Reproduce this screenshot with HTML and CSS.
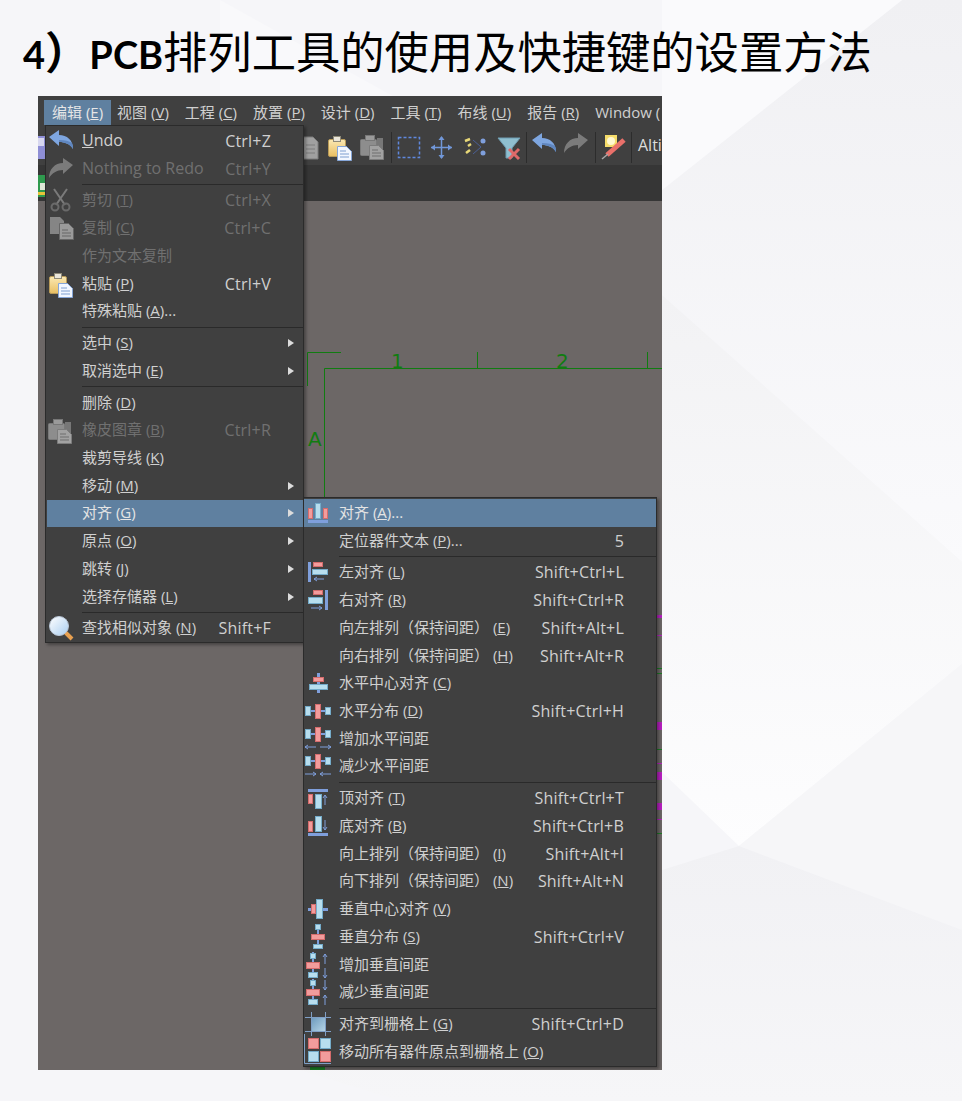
FILE: index.html
```html
<!DOCTYPE html>
<html lang="zh-CN">
<head>
  <meta charset="UTF-8" />
  <title>PCB排列工具</title>
  <link rel="stylesheet" href="styles.css">
</head>
<body>

  <!-- shared icon parts -->
  <svg class="defs" aria-hidden="true">
    <defs>
      <linearGradient id="gold" x1="0" y1="0" x2="0" y2="1">
        <stop offset="0" stop-color="#fbe9b4"/><stop offset="1" stop-color="#e9bf62"/>
      </linearGradient>
      <linearGradient id="glass" x1="0" y1="0" x2="1" y2="1">
        <stop offset="0" stop-color="#ffffff"/><stop offset="1" stop-color="#a9cdf0"/>
      </linearGradient>
      <linearGradient id="cell" x1="0" y1="0" x2="1" y2="1">
        <stop offset="0" stop-color="#6f9cbf"/><stop offset="1" stop-color="#b5d4e6"/>
      </linearGradient>
      <linearGradient id="bgfade" x1="0" y1="0" x2="0" y2="1">
        <stop offset="0" stop-color="#f0f0f3"/><stop offset="1" stop-color="#fafafc"/>
      </linearGradient>
      <linearGradient id="bgfade2" x1="0" y1="0" x2="0" y2="1">
        <stop offset="0" stop-color="#f1f1f4"/><stop offset="1" stop-color="#f6f6f8"/>
      </linearGradient>
      <linearGradient id="bgfade3" x1="0" y1="0" x2="0" y2="1">
        <stop offset="0" stop-color="#f2f2f4"/><stop offset="1" stop-color="#fdfdfe"/>
      </linearGradient>
    </defs>
    <symbol id="s-paste" viewBox="0 0 28 28">
      <rect x="2.5" y="6.5" width="17" height="17" rx="1.5" fill="url(#gold)" stroke="#b89a58"/>
      <rect x="7.5" y="3.5" width="7" height="5" fill="#eae6da" stroke="#8f8a78"/>
      <path d="M11.5 13.5h9l5 5v9h-14z" fill="#f2f7ff" stroke="#86a6d8"/>
      <path d="M14 18h6M14 21h9M14 24h9" stroke="#7f9fd0" fill="none"/>
    </symbol>
    <symbol id="s-stamp" viewBox="0 0 28 28">
      <rect x="1.5" y="7.5" width="16" height="16" rx="1" fill="#8d8d8d" stroke="#7a7a7a"/>
      <rect x="6.5" y="3.5" width="9" height="5" fill="#9a9a9a" stroke="#777"/>
      <rect x="18" y="6" width="6" height="14" fill="#777"/>
      <path d="M10.5 13.5h9l5 5v9h-14z" fill="#a2a2a2" stroke="#7c7c7c"/>
      <path d="M13 18h6M13 21h9M13 24h9" stroke="#6f6f6f" fill="none"/>
    </symbol>
    <symbol id="s-undo" viewBox="0 0 28 28">
      <path d="M2 10 12 3v5c8 0 14 5 14 14-3-5-8-7-14-7v4z" fill="#7ea6e0"/>
      <path d="M12 15c6 0 11 2 14 7 0-2 0-4-1-6-3-2-7-3-13-3z" fill="#5f86bf"/>
    </symbol>
    <symbol id="s-redo" viewBox="0 0 28 28">
      <path d="M26 10 16 3v5C8 8 2 14 2 23c3-5 8-8 14-8v4z" fill="#7b7b7b"/>
    </symbol>
    <symbol id="s-hdist" viewBox="0 0 28 28">
      <rect class="stem" x="1" y="13" width="25" height="2"/>
      <rect class="bl" x="1.5" y="9.5" width="5" height="9"/>
      <rect class="rd" x="11.5" y="7.5" width="5" height="14"/>
      <rect class="bl" x="21.5" y="10.5" width="5" height="7"/>
    </symbol>
    <symbol id="s-vdist" viewBox="0 0 28 28">
      <rect class="stem" x="8" y="1" width="2" height="25"/>
      <rect class="bl" x="6.5" y="2.5" width="5" height="5"/>
      <rect class="rd" x="2.5" y="11.5" width="13" height="6"/>
      <rect class="bl" x="4.5" y="21.5" width="9" height="5"/>
    </symbol>
  </svg>

  <!-- faint slide backdrop -->
  <svg class="backdrop" viewBox="0 0 962 1101" aria-hidden="true">
    <polygon points="902,0 962,0 962,562 662,295 662,190" fill="url(#bgfade)"/>
    <polygon points="662,295 962,562 962,664 739,846 662,772" fill="url(#bgfade3)"/>
    <polygon points="962,664 739,846 962,930" fill="#f6f6f8"/>
    <polygon points="739,846 962,930 962,1101 400,1101 300,1070 662,870" fill="url(#bgfade2)"/>
    <polygon points="220,0 400,100 220,100" fill="#f9f9fb"/>
    <polygon points="662,0 902,0 662,190" fill="#fafafc"/>
  </svg>

  <h1 class="title"><b>4<span class="paren">）</span>PCB</b>排列工具的使用及快捷键的设置方法</h1>

  <div class="shot">
    <nav class="menubar">
      <span class="top on">编辑 (<u>E</u>)</span>
      <span class="top">视图 (<u>V</u>)</span>
      <span class="top">工程 (<u>C</u>)</span>
      <span class="top">放置 (<u>P</u>)</span>
      <span class="top">设计 (<u>D</u>)</span>
      <span class="top">工具 (<u>T</u>)</span>
      <span class="top">布线 (<u>U</u>)</span>
      <span class="top">报告 (<u>R</u>)</span>
      <span class="top">Window (</span>
    </nav>

    <div class="toolbar">
      <svg class="strip" width="594" height="40" viewBox="0 0 594 40">
        <rect x="0" y="11" width="8" height="23" fill="#8f8fd6"/>
        <rect x="0" y="13" width="6" height="8" fill="#d8d8f0"/>
        <path d="M265 12h10l5 5v17h-15z" fill="#a0a0a0" stroke="#7d7d7d"/>
        <path d="M268 20h9M268 24h9M268 28h9" stroke="#7d7d7d"/>
        <use href="#s-paste" x="288" y="8" width="28" height="28"/>
        <use href="#s-stamp" x="321" y="7" width="28" height="28"/>
        <rect class="tb-sep" x="353" y="7" width="1" height="31"/>
        <rect x="360.5" y="12.5" width="21" height="20" fill="none" stroke="#5f88dd" stroke-width="1.5" stroke-dasharray="3 2"/>
        <path d="M393 22.5h21M403.500 12v21" stroke="#7197d8" stroke-width="1.5"/>
        <path d="M393 22.500l4-3v6zM414 22.500l-4-3v6zM403.500 11l-3 4h6zM403.500 34l-3-4h6z" fill="#7197d8"/>
        <path d="M435 15l8 7-8 7" fill="none" stroke="#4a5f95"/>
        <circle cx="445" cy="16" r="2.500" fill="#7f9fdc"/><circle cx="445" cy="28" r="2.500" fill="#7f9fdc"/>
        <path d="M427 16l5-2M433 19l-3 2M428 28l4-3" stroke="#e8d878" stroke-width="2.500"/>
        <path d="M460 13h22l-8 10v10h-6V23z" fill="#8fbfd0" stroke="#6f9db2"/>
        <path d="M471 24l10 10m0-10l-10 10" stroke="#e06a6a" stroke-width="3"/>
        <rect class="tb-sep" x="488" y="7" width="1" height="31"/>
        <use href="#s-undo" x="492" y="5" width="28" height="28"/>
        <use href="#s-redo" x="524" y="5" width="28" height="28"/>
        <rect class="tb-sep" x="557" y="7" width="1" height="31"/>
        <rect x="567" y="10" width="12" height="12" fill="#f5dc6a"/>
        <circle cx="573" cy="16" r="4" fill="#fff8d0"/>
        <path d="M586 15l-17 15" stroke="#e9706a" stroke-width="5"/>
        <path d="M570 29l-6 5" stroke="#a8a8a8" stroke-width="1.500"/>
        <rect class="tb-sep" x="593" y="7" width="1" height="31"/>
      </svg>
      <span class="tb-text">Alti</span>
    </div>

    <div class="tabstrip">
      <svg width="8" height="22" viewBox="0 0 8 22">
        <rect x="0" y="0" width="8" height="22" fill="#2f9a4e"/>
        <rect x="2" y="8" width="6" height="7" fill="#dfe8d8"/>
        <rect x="0" y="17" width="8" height="3" fill="#e8c43a"/>
      </svg>
    </div>

    <div class="canvas">
      <!-- the sheet border, as it lies on the drawing area -->
      <svg class="sheet" width="624" height="869" viewBox="0 0 624 869">
        <path class="wire" d="M303 151.500H269.500V185M624 167.500H286.500V300M439.500 151V167M609.500 151V167"/>
        <text class="sheet-label" x="353" y="167">1</text>
        <text class="sheet-label" x="518" y="167">2</text>
        <text class="sheet-label" x="270" y="245">A</text>
        <g fill="#b71fc0">
          <rect x="619" y="414" width="5" height="3"/>
          <rect x="619" y="434" width="5" height="1"/>
          <rect x="619" y="521" width="5" height="8"/>
          <rect x="619" y="562" width="5" height="1"/>
          <rect x="619" y="571" width="5" height="8"/>
          <rect x="619" y="602" width="5" height="7"/>
          <rect x="619" y="618" width="5" height="1"/>
        </g>
        <g fill="#1b7d24">
          <rect x="619" y="467" width="5" height="1"/>
          <rect x="619" y="472" width="5" height="1"/>
          <rect x="619" y="548" width="5" height="1"/>
          <rect x="619" y="632" width="5" height="1"/>
          <rect x="272" y="866" width="15" height="3"/>
        </g>
      </svg>
    </div>

    <div class="menu menu-edit">
      <div class="mi"><span class="cell"><svg class="ico"><use href="#s-undo"/></svg></span><span class="en"><u>U</u>ndo</span><span class="key">Ctrl+Z</span></div>
      <div class="mi off"><span class="cell"><svg class="ico"><use href="#s-redo"/></svg></span><span class="en">Nothing to Redo</span><span class="key">Ctrl+Y</span></div>
      <div class="sep"></div>
      <div class="mi off"><span class="cell"><svg class="ico" viewBox="0 0 28 28"><path d="M7 3l11 16M20 3L9 19" stroke="#7a7a7a" stroke-width="2" fill="none"/><circle cx="8" cy="21" r="3.500" fill="none" stroke="#6a6a6a" stroke-width="2"/><circle cx="19" cy="21" r="3.500" fill="none" stroke="#6a6a6a" stroke-width="2"/></svg></span><span>剪切 (<u>T</u>)</span><span class="key">Ctrl+X</span></div>
      <div class="mi off"><span class="cell"><svg class="ico" viewBox="0 0 28 28"><path d="M3 3h10l4 4v13H3z" fill="#858585"/><path d="M12.500 9.500h9l5 5v11h-14z" fill="#9a9a9a" stroke="#666"/><path d="M15 16h6M15 19h9M15 22h9" stroke="#666"/></svg></span><span>复制 (<u>C</u>)</span><span class="key">Ctrl+C</span></div>
      <div class="mi off"><span class="cell"></span><span>作为文本复制</span></div>
      <div class="mi"><span class="cell"><svg class="ico"><use href="#s-paste"/></svg></span><span>粘贴 (<u>P</u>)</span><span class="key">Ctrl+V</span></div>
      <div class="mi"><span class="cell"></span><span>特殊粘贴 (<u>A</u>)...</span></div>
      <div class="sep"></div>
      <div class="mi"><span class="cell"></span><span>选中 (<u>S</u>)</span><i class="more"></i></div>
      <div class="mi"><span class="cell"></span><span>取消选中 (<u>E</u>)</span><i class="more"></i></div>
      <div class="sep"></div>
      <div class="mi"><span class="cell"></span><span>删除 (<u>D</u>)</span></div>
      <div class="mi off"><span class="cell"><svg class="ico"><use href="#s-stamp"/></svg></span><span>橡皮图章 (<u>B</u>)</span><span class="key">Ctrl+R</span></div>
      <div class="mi"><span class="cell"></span><span>裁剪导线 (<u>K</u>)</span></div>
      <div class="mi"><span class="cell"></span><span>移动 (<u>M</u>)</span><i class="more"></i></div>
      <div class="mi on"><span class="cell"></span><span>对齐 (<u>G</u>)</span><i class="more"></i></div>
      <div class="mi"><span class="cell"></span><span>原点 (<u>O</u>)</span><i class="more"></i></div>
      <div class="mi"><span class="cell"></span><span>跳转 (<u>J</u>)</span><i class="more"></i></div>
      <div class="mi"><span class="cell"></span><span>选择存储器 (<u>L</u>)</span><i class="more"></i></div>
      <div class="sep"></div>
      <div class="mi"><span class="cell"><svg class="ico" viewBox="0 0 28 28"><path d="M18 18l7 7" stroke="#e8a050" stroke-width="4"/><circle cx="12" cy="12" r="9.500" fill="url(#glass)" stroke="#b9c6d6"/></svg></span><span>查找相似对象 (<u>N</u>)</span><span class="key">Shift+F</span></div>
    </div>

    <div class="menu menu-align">
      <div class="mi on"><span class="cell"><svg class="ico" viewBox="0 0 28 28"><rect class="rd" x="4.500" y="9.500" width="4" height="10"/><rect class="bl" x="11.500" y="4.500" width="5" height="15"/><rect class="rd" x="19.500" y="9.500" width="4" height="10"/><rect class="bar" x="4" y="21" width="20" height="3"/></svg></span><span>对齐 (<u>A</u>)...</span></div>
      <div class="mi"><span class="cell"></span><span>定位器件文本 (<u>P</u>)...</span><span class="key">5</span></div>
      <div class="sep"></div>
      <div class="mi"><span class="cell"><svg class="ico" viewBox="0 0 28 28"><rect class="bar" x="4" y="4" width="3" height="20"/><rect class="rd" x="9.500" y="4.500" width="9" height="4"/><rect class="bl" x="8.500" y="11.500" width="15" height="5"/><path class="ar" d="M20 21H10M13 19l-3 2 3 2"/></svg></span><span>左对齐 (<u>L</u>)</span><span class="key">Shift+Ctrl+L</span></div>
      <div class="mi"><span class="cell"><svg class="ico" viewBox="0 0 28 28"><rect class="bar" x="21" y="4" width="3" height="20"/><rect class="rd" x="9.500" y="4.500" width="9" height="4"/><rect class="bl" x="4.500" y="11.500" width="14" height="6"/><path class="ar" d="M7 22H18M15 20l3 2-3 2"/></svg></span><span>右对齐 (<u>R</u>)</span><span class="key">Shift+Ctrl+R</span></div>
      <div class="mi"><span class="cell"></span><span>向左排列（保持间距） (<u>E</u>)</span><span class="key">Shift+Alt+L</span></div>
      <div class="mi"><span class="cell"></span><span>向右排列（保持间距） (<u>H</u>)</span><span class="key">Shift+Alt+R</span></div>
      <div class="mi"><span class="cell"><svg class="ico" viewBox="0 0 28 28"><rect class="stem" x="13" y="4" width="3" height="20"/><rect class="rd" x="9.500" y="8.500" width="10" height="4"/><rect class="bl" x="5.500" y="15.500" width="18" height="5"/></svg></span><span>水平中心对齐 (<u>C</u>)</span></div>
      <div class="mi"><span class="cell"><svg class="ico"><use href="#s-hdist"/></svg></span><span>水平分布 (<u>D</u>)</span><span class="key">Shift+Ctrl+H</span></div>
      <div class="mi"><span class="cell"><svg class="ico" viewBox="0 0 28 28"><use href="#s-hdist" y="-5" width="28" height="28"/><path class="ar" d="M12 22H1M4 20l-3 2 3 2M16 22h11M24 20l3 2-3 2"/></svg></span><span>增加水平间距</span></div>
      <div class="mi"><span class="cell"><svg class="ico" viewBox="0 0 28 28"><use href="#s-hdist" y="-5" width="28" height="28"/><path class="ar" d="M1 22h11M9 20l3 2-3 2M27 22H16M19 20l-3 2 3 2"/></svg></span><span>减少水平间距</span></div>
      <div class="sep"></div>
      <div class="mi"><span class="cell"><svg class="ico" viewBox="0 0 28 28"><rect class="bar" x="4" y="5" width="20" height="3"/><rect class="rd" x="4.500" y="10.500" width="4" height="9"/><rect class="bl" x="11.500" y="10.500" width="6" height="14"/><path class="ar" d="M21 21V11M19 14l2-3 2 3"/></svg></span><span>顶对齐 (<u>T</u>)</span><span class="key">Shift+Ctrl+T</span></div>
      <div class="mi"><span class="cell"><svg class="ico" viewBox="0 0 28 28"><rect class="rd" x="4.500" y="9.500" width="4" height="10"/><rect class="bl" x="11.500" y="4.500" width="6" height="15"/><rect class="bar" x="4" y="21" width="20" height="3"/><path class="ar" d="M21 8V18M19 15l2 3 2-3"/></svg></span><span>底对齐 (<u>B</u>)</span><span class="key">Shift+Ctrl+B</span></div>
      <div class="mi"><span class="cell"></span><span>向上排列（保持间距） (<u>I</u>)</span><span class="key">Shift+Alt+I</span></div>
      <div class="mi"><span class="cell"></span><span>向下排列（保持间距） (<u>N</u>)</span><span class="key">Shift+Alt+N</span></div>
      <div class="mi"><span class="cell"><svg class="ico" viewBox="0 0 28 28"><rect class="stem" x="4" y="13" width="20" height="3"/><rect class="rd" x="7.500" y="9.500" width="4" height="9"/><rect class="bl" x="12.500" y="4.500" width="6" height="19"/></svg></span><span>垂直中心对齐 (<u>V</u>)</span></div>
      <div class="mi"><span class="cell"><svg class="ico" viewBox="0 0 28 28"><rect class="stem" x="13" y="2" width="2" height="24"/><rect class="bl" x="11.500" y="1.500" width="5" height="5"/><rect class="rd" x="7.500" y="11.500" width="13" height="5"/><rect class="bl" x="9.500" y="21.500" width="9" height="4"/></svg></span><span>垂直分布 (<u>S</u>)</span><span class="key">Shift+Ctrl+V</span></div>
      <div class="mi"><span class="cell"><svg class="ico"><use href="#s-vdist"/><path class="ar" d="M21 13V3M19 6l2-3 2 3M21 17V27M19 24l2 3 2-3"/></svg></span><span>增加垂直间距</span></div>
      <div class="mi"><span class="cell"><svg class="ico"><use href="#s-vdist"/><path class="ar" d="M21 2V12M19 9l2 3 2-3M21 27V17M19 20l2-3 2 3"/></svg></span><span>减少垂直间距</span></div>
      <div class="sep"></div>
      <div class="mi"><span class="cell"><svg class="ico" viewBox="0 0 28 28"><rect x="8" y="8" width="13" height="13" fill="url(#cell)"/><path d="M1 7.500H27M1 21.500H27M7.500 2V26M21.500 2V26" stroke="#7f9fc6"/></svg></span><span>对齐到栅格上 (<u>G</u>)</span><span class="key">Shift+Ctrl+D</span></div>
      <div class="mi"><span class="cell"><svg class="ico" viewBox="0 0 28 28"><path d="M0.500 -4V25.500H27" fill="none" stroke="#7f9fc6"/><rect class="rd" x="4.500" y="0.500" width="10" height="10"/><rect class="bl" x="16.500" y="0.500" width="10" height="10"/><rect class="bl" x="4.500" y="13.500" width="10" height="10"/><rect class="rd" x="16.500" y="13.500" width="10" height="10"/></svg></span><span>移动所有器件原点到栅格上 (<u>O</u>)</span></div>
    </div>
  </div>

</body>
</html>
```

FILE: styles.css
```css
html, body {
  margin: 0;
  padding: 0;
}
body {
  position: relative;
  width: 962px;
  height: 1101px;
  overflow: hidden;
  background-color: #f6f6f9;
  font-family: "Noto Sans CJK SC", sans-serif;
}
.defs {
  position: absolute;
  width: 0;
  height: 0;
}
.backdrop {
  position: absolute;
  left: 0;
  top: 0;
  width: 962px;
  height: 1101px;
}

.title {
  position: relative;
  margin: 0;
  padding: 19px 0 0 23px;
  height: 76px;
  box-sizing: border-box;
  font-family: "Noto Sans CJK SC", sans-serif;
  font-size: 44.3px;
  line-height: 62px;
  font-weight: 400;
  color: #000;
  white-space: nowrap;
}
.title b {
  font-family: "Lato", "Noto Sans CJK SC", sans-serif;
  font-weight: 700;
  font-size: 38px;
}
.paren {
  font-size: 44.3px;
}

/* the screenshot of the editor */
.shot {
  position: relative;
  margin: 20px 0 0 38px;
  width: 624px;
  height: 974px;
  overflow: hidden;
  display: flex;
  flex-direction: column;
  background-color: #6c6766;
  font-family: "Open Sans", "Noto Sans CJK SC", sans-serif;
  font-size: 15px;
  color: #d0d0d0;
}
.menubar {
  display: flex;
  flex: none;
  height: 29px;
  padding: 4px 0 0 6px;
  box-sizing: border-box;
  background-color: #404040;
  white-space: nowrap;
}
.top {
  height: 25px;
  line-height: 25px;
  padding: 0 8px 0 8px;
  flex: none;
}
.top.on {
  background-color: #5f80a0;
  color: #e6e6e6;
  margin-right: -2px;
}
.toolbar {
  display: flex;
  flex: none;
  align-items: center;
  height: 40px;
  background-color: #404040;
  white-space: nowrap;
}
.strip {
  flex: none;
}
.tb-sep {
  fill: #2c2c2c;
}
.tb-text {
  margin-left: 6px;
  font-size: 16px;
  color: #dcdcdc;
}
.tabstrip {
  flex: none;
  height: 36px;
  padding-top: 10px;
  box-sizing: border-box;
  background-color: #363636;
}
.canvas {
  position: relative;
  flex: 1;
}
.sheet {
  position: absolute;
  left: 0;
  top: 0;
}
.wire {
  fill: none;
  stroke: #117c11;
  stroke-width: 1;
}
.sheet-label {
  fill: #117c11;
  font-family: "DejaVu Sans", sans-serif;
  font-size: 20px;
}

/* drop down menus */
.menu {
  position: absolute;
  box-sizing: border-box;
  border: 1px solid #2b2b2b;
  background-color: #404040;
  box-shadow: 2px 2px 3px rgba(0, 0, 0, 0.35);
  white-space: nowrap;
}
.menu-edit {
  left: 7px;
  top: 29px;
  width: 259px;
  height: 518px;
  padding: 1px 0 0 1px;
}
.menu-align {
  left: 265px;
  top: 401px;
  width: 354px;
  height: 570px;
  padding: 1px 0 0 0;
}
.mi {
  display: flex;
  align-items: center;
  height: 27.72px;
  padding: 0 32px 2px 0;
  box-sizing: border-box;
  line-height: 20px;
}
.mi.off {
  color: #707070;
}
.mi.on {
  background-color: #5f80a0;
  color: #e4e4e4;
}
.cell {
  flex: none;
  display: block;
  height: 28px;
  width: 35px;
  margin-bottom: -2px;
}
.ico {
  display: block;
  width: 28px;
  height: 28px;
  overflow: visible;
}
.en {
  font-size: 16px;
}
.key {
  margin-left: auto;
  margin-top: 2px;
  font-size: 16px;
  letter-spacing: 0.2px;
}
.more {
  margin-left: auto;
  margin-right: -23px;
  margin-top: 2px;
  border-left: 6px solid #dcdcdc;
  border-top: 4px solid transparent;
  border-bottom: 4px solid transparent;
}
.sep {
  height: 1px;
  margin: 1.55px 0 1.55px 35px;
  background-color: #2a2a2a;
}

/* small pieces of the alignment icons */
.rd {
  fill: #f29c9c;
  stroke: #d56c6c;
}
.bl {
  fill: #b8deee;
  stroke: #74abc9;
}
.bar, .stem {
  fill: #7f9fdc;
}
.ar {
  fill: none;
  stroke: #7f9fdc;
}
```
